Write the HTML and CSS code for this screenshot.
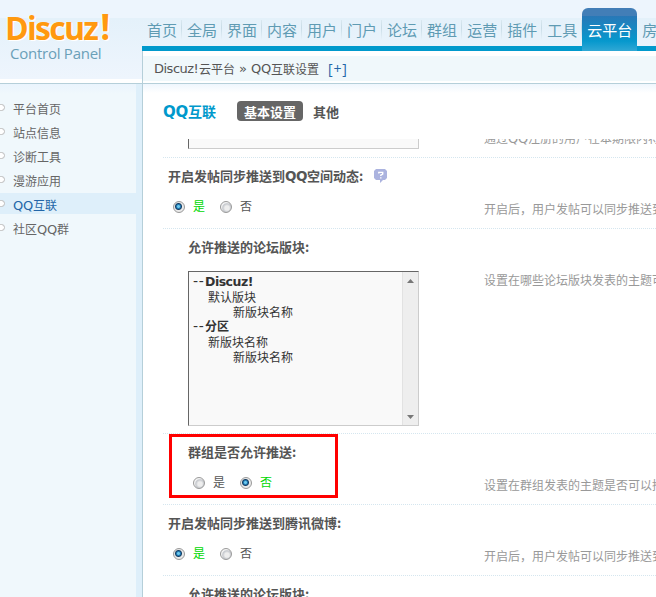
FILE: index.html
```html
<!DOCTYPE html>
<html lang="zh-CN">
<head>
<meta charset="utf-8">
<title>Discuz! Control Panel</title>
<link rel="stylesheet" href="styles.css">
</head>
<body>
<div class="app">
  <header class="header">
    <div class="logo">
      <div class="brand">Discuz<span class="bang">!</span></div>
      <div class="subtitle">Control Panel</div>
    </div>
    <div class="top">
      <nav class="nav">
        <a>首页</a><a>全局</a><a>界面</a><a>内容</a><a>用户</a><a>门户</a><a>论坛</a><a>群组</a><a>运营</a><a>插件</a><a>工具</a><a class="current">云平台</a><a>房产</a>
      </nav>
      <div class="crumbs"><span class="lat disc">Discuz!</span><span class="cloud">云平台</span><span class="sep">»</span><span class="lat qq">QQ</span><span>互联设置</span><a class="plus">[+]</a></div>
    </div>
  </header>
  <div class="body">
    <aside class="side">
      <a><i></i>平台首页</a>
      <a><i></i>站点信息</a>
      <a><i></i>诊断工具</a>
      <a><i></i>漫游应用</a>
      <a class="on"><i></i><span class="lat qq">QQ</span>互联</a>
      <a><i></i>社区<span class="lat qq">QQ</span>群</a>
    </aside>
    <main class="main">
      <div class="titlebar">
        <h1><span class="lat">QQ</span>互联</h1>
        <span class="tab active">基本设置</span>
        <span class="tab">其他</span>
      </div>
      <div class="scroll">
        <section class="row cut">
          <div class="field"><div class="area"></div></div>
          <div class="tip cut-tip">通过<span class="lat qq">QQ</span>注册的用户在本期限内将无法发帖</div>
        </section>
        <section class="row">
          <div class="field">
            <h2>开启发帖同步推送到<span class="lat hq">QQ</span>空间动态:<svg class="help" width="14" height="14" viewBox="0 0 14 14"><path d="M2 0h9l2 2v7l-2 2H9l-3 3v-3H2L0 9V2z" fill="#abb3df"/><path d="M4.8 4.5V3.4h3.9v1.8L6.8 6.2V7M6.8 8.2v1.3" fill="none" stroke="#fff" stroke-width="1.4"/></svg></h2>
            <div class="radios"><span class="radio checked"><i></i>是</span><span class="radio"><i></i>否</span></div>
          </div>
          <div class="tip">开启后，用户发帖可以同步推送到QQ空间</div>
        </section>
        <section class="row tall">
          <div class="field sub">
            <h2>允许推送的论坛版块:</h2>
            <div class="list">
              <div class="options">
                <div class="group"><span class="dash">--</span><span class="lat name">Discuz!</span></div>
                <div class="l1">默认版块</div>
                <div class="l2">新版块名称</div>
                <div class="group"><span class="dash">--</span><b>分区</b></div>
                <div class="l1">新版块名称</div>
                <div class="l2">新版块名称</div>
              </div>
              <div class="bar">
                <svg width="7" height="4" viewBox="0 0 7 4"><path d="M3.5 0L7 4H0z" fill="#777"/></svg>
                <svg width="7" height="4" viewBox="0 0 7 4"><path d="M0 0h7L3.5 4z" fill="#777"/></svg>
              </div>
            </div>
          </div>
          <div class="tip">设置在哪些论坛版块发表的主题可以推送</div>
        </section>
        <section class="row">
          <div class="field sub">
            <h2>群组是否允许推送:</h2>
            <div class="radios"><span class="radio"><i></i>是</span><span class="radio checked"><i></i>否</span></div>
          </div>
          <div class="tip">设置在群组发表的主题是否可以推送</div>
          <div class="mark"></div>
        </section>
        <section class="row">
          <div class="field">
            <h2>开启发帖同步推送到腾讯微博:</h2>
            <div class="radios"><span class="radio checked"><i></i>是</span><span class="radio"><i></i>否</span></div>
          </div>
          <div class="tip">开启后，用户发帖可以同步推送到腾讯微博</div>
        </section>
        <section class="row">
          <div class="field sub"><h2>允许推送的论坛版块:</h2></div>
        </section>
      </div>
    </main>
  </div>
</div>
</body>
</html>
```
FILE: styles.css
```css
* { box-sizing: border-box; }
body {
  margin: 0;
  overflow: hidden;
  font: 12px/16px "Noto Sans CJK SC", sans-serif;
  color: #555;
  background: #fff;
}
i { font-style: normal; }
.lat { font-family: "DejaVu Sans", sans-serif; }
.qq { display: inline-block; width: 20px; font-size: 13px; letter-spacing: -0.3px; }
.hq { width: 22px; font-size: 13.5px; letter-spacing: -0.6px; }
.app { width: 656px; height: 597px; overflow: hidden; display: flex; flex-direction: column; }

.header {
  display: flex;
  height: 84px;
  flex: none;
  border-bottom: 1px solid #b5cfd9;
  background: linear-gradient(#edf5fd 0 18px, #e4f1fa 18px, #eef5fd 79px, #fff 79px);
}
.logo { width: 142px; flex: none; padding: 10px 0 0 5px; }
.brand {
  height: 34px;
  font: bold 32px/36px "Open Sans", sans-serif;
  letter-spacing: -1.7px;
  color: #ff9910;
  text-shadow: 1px 1px 0 #fff, -1px 0 0 #fff;
}
.bang { display: inline-block; font-size: 35px; line-height: 30px; margin-left: 3px; }
.subtitle {
  padding-left: 5px;
  font: 15px/18px "Open Sans", sans-serif;
  letter-spacing: -0.25px;
  color: #6aa0b8;
}
.top { flex: 1; min-width: 0; display: flex; flex-direction: column; }
.nav {
  display: flex;
  align-items: flex-end;
  height: 51px;
  overflow: hidden;
  font-size: 15px;
  color: #5f9bb3;
  background: linear-gradient(transparent 46px, #09c 46px);
}
.nav a {
  flex: none;
  height: 31px;
  padding: 0 5px;
  line-height: 20px;
  background: linear-gradient(#d9e7ef, #c8dce6 8px, #e8f2fa 20px) 100% 0 / 1px 20px no-repeat;
}
.nav .current {
  height: 43px;
  padding: 12px 5px 0;
  border-radius: 6px 6px 0 0;
  color: #fff;
  background: linear-gradient(#427eb7 0 8px, #2878b7 8px, #0698cd 33px, #30a8d5 43px);
}
.crumbs {
  display: flex;
  height: 32px;
  padding: 5px 0 0 11px;
  border-left: 1px solid #b5cfd9;
  line-height: 26px;
  background: linear-gradient(#fff 5px, #f0f8fb 5px 30px, #fff 30px);
  white-space: nowrap;
}
.disc { width: 45px; font-size: 13px; letter-spacing: -0.5px; }
.cloud { width: 36px; }
.sep { width: 16px; text-align: center; font-family: "DejaVu Sans", sans-serif; font-size: 13px; }
.plus { margin-left: 9px; font: 14px/25px "Open Sans", sans-serif; letter-spacing: 0.8px; color: #2366a8; }

.body { flex: 1; min-height: 0; display: flex; }
.side {
  width: 142px;
  flex: none;
  padding-top: 13px;
  border-right: 6px solid #deeffa;
  background: linear-gradient(#eaf4fd, #f0f8fc 10px);
  color: #666;
}
.side a { position: relative; display: block; height: 21px; margin-bottom: 3px; padding-left: 13px; line-height: 24px; }
.side i { position: absolute; left: -3px; top: 7px; width: 8px; height: 7px; border: 1px solid #bbb; border-radius: 4px; background: #fff; }
.side .on { background: #deeffa; color: #2366a8; }
.main {
  flex: 1;
  min-width: 0;
  border-left: 1px solid #b5cfd9;
  padding-left: 20px;
  display: flex;
  flex-direction: column;
  background: linear-gradient(#eff6fd, #fff 9px);
}
.titlebar { display: flex; height: 55px; flex: none; padding-top: 17px; }
h1 { width: 74px; margin: 0; font-size: 14px; line-height: 20px; color: #09c; white-space: nowrap; }
h1 .lat { font-size: 15px; letter-spacing: -0.2px; }
.tab { height: 20px; padding: 0 7px; margin-right: 3px; border-radius: 4px; font-weight: bold; font-size: 13px; line-height: 21px; }
.active { background: #666; color: #fff; }
.scroll { flex: 1; min-height: 0; overflow: hidden; }
.row { position: relative; display: grid; grid-template-columns: 314px 1fr; height: 71px; border-bottom: 1px dotted #d5e6ef; white-space: nowrap; overflow: hidden; }
.tall { height: 205px; }
.cut { height: 19px; }
.field { padding: 9px 0 0 5px; }
.sub { padding-left: 25px; }
h2 { display: flex; margin: 0; height: 18px; font-size: 13px; line-height: 18px; }
.help { margin: 2px 0 0 11px; }
.tip { padding: 43px 0 0 7px; color: #999; }
.cut-tip { padding-top: 0; margin-top: -9px; }
.area { width: 231px; height: 20px; margin: -19px 0 0 20px; border: 1px solid #ccc; border-left-color: #666; background: #f9f9f9; }
.radios { display: flex; padding: 13px 0 0 5px; line-height: 16px; }
.radio { display: flex; width: 47px; font-size: 12px; }
.radio i { width: 12px; height: 12px; margin: 3px 8px 0 0; border: 1px solid #999; border-radius: 50%; background: radial-gradient(circle at 60% 60%, #eee 25%, #c5c8cd 50%, #f5f5f5 65%); }
.checked { color: #00d800; }
.checked i { background: radial-gradient(circle at 45% 45%, #6cc8ec 0 1px, #1f7ab5 2px, #173f63 3px, #e9e9e9 4px); }
.list { display: flex; width: 231px; height: 155px; margin-top: 15px; border: 1px solid #ccc; border-top-color: #666; border-left-color: #666; background: #f9f9f9; color: #333; }
.options { flex: 1; padding: 2px 0 0 4px; line-height: 15px; }
.options div { height: 15px; }
.group { margin-top: -1px; margin-bottom: 1px; }
.name { font-weight: bold; font-size: 12.5px; letter-spacing: -0.5px; }
.dash { display: inline-block; width: 12px; font-family: "DejaVu Sans", sans-serif; font-size: 14px; letter-spacing: 0.8px; }
.l1 { padding-left: 15px; }
.l2 { padding-left: 40px; }
.bar { display: flex; flex-direction: column; justify-content: space-between; align-items: center; width: 16px; padding: 7px 0 6px; border-left: 1px solid #e2e2e2; background: #eee; }
.mark { position: absolute; left: 6px; top: 0; width: 169px; height: 64px; border: 3px solid #f00; }
```
